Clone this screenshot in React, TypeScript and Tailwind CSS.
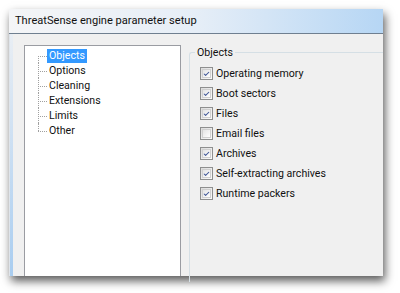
import { Check } from 'lucide-react'

const treeItems = ['Objects', 'Options', 'Cleaning', 'Extensions', 'Limits', 'Other']

const objects = [
  { label: 'Operating memory', checked: true },
  { label: 'Boot sectors', checked: true },
  { label: 'Files', checked: true },
  { label: 'Email files', checked: false },
  { label: 'Archives', checked: true },
  { label: 'Self-extracting archives', checked: true },
  { label: 'Runtime packers', checked: true },
]

function CheckBox({ checked }: { checked: boolean }) {
  return (
    <div className="flex h-[13px] w-[13px] shrink-0 items-center justify-center border border-[#8e8f8f] bg-gradient-to-br from-[#dcdcdc] to-[#fbfbfb]">
      <div className="flex h-[9px] w-[9px] items-center justify-center border border-[#d0d0d0] bg-gradient-to-br from-[#e4e4e4] to-white">
        {checked && <Check className="h-[10px] w-[10px] text-[#3d5596]" strokeWidth={3.5} />}
      </div>
    </div>
  )
}

export default function App() {
  return (
    <div className="h-[293px] w-[400px] overflow-hidden bg-white pl-[9px] pt-[9px] font-['Roboto',sans-serif] text-[10.6px] text-[#111]">
      <div className="flex h-[267px] w-[374px] flex-col shadow-[2px_5px_9px_rgba(0,0,0,0.65)]">

        {/* Title bar */}
        <div className="flex h-[25px] shrink-0 items-center border-b border-[#6f7f90] bg-gradient-to-r from-[#f4f5f7] via-[#e6eef7] to-[#b6d6f4] pl-[6px] pt-[1px] text-[11.1px]">
          ThreatSense engine parameter setup
        </div>

        <div className="flex flex-1">
          {/* left frame */}
          <div className="w-[4px] shrink-0 border-l border-[#dfe4ea] bg-gradient-to-b from-[#e9eef4] to-[#a9cdf0]" />

          <div className="flex flex-1 bg-[#f0f0f0] pl-[11px] pt-[11px]">
            {/* Tree */}
            <div className="w-[157px] shrink-0 border-x border-t border-[#9a9ca2] bg-white pl-[13px] pt-[2px]">
              {treeItems.map((item, i) => (
                <div key={item} className="flex h-[15px] items-center">
                  <div className="relative h-full w-[9px] shrink-0">
                    <div
                      className={
                        i === 0
                          ? 'absolute bottom-0 left-0 top-1/2 border-l border-dotted border-[#a0a0a0]'
                          : i === treeItems.length - 1
                            ? 'absolute left-0 top-0 h-1/2 border-l border-dotted border-[#a0a0a0]'
                            : 'absolute bottom-0 left-0 top-0 border-l border-dotted border-[#a0a0a0]'
                      }
                    />
                    <div className="absolute left-0 right-0 top-1/2 border-t border-dotted border-[#a0a0a0]" />
                  </div>
                  <span className={i === 0 ? 'bg-[#3399ff] px-[2px] leading-[14px] text-white' : 'px-[2px] leading-[14px]'}>
                    {item}
                  </span>
                </div>
              ))}
            </div>

            {/* Objects group */}
            <div className="ml-[8px] flex-1 pt-[1px]">
              <div className="relative mt-[6px] h-full rounded-tl-[3px] border-l border-t border-[#d5dfe5]">
                <span className="absolute -top-[8px] left-[5px] bg-[#f0f0f0] px-[2px] leading-[16px]">Objects</span>
                <div className="flex flex-col gap-[7px] pl-[10px] pt-[14px]">
                  {objects.map((o) => (
                    <div key={o.label} className="flex h-[13px] items-center gap-[3px]">
                      <CheckBox checked={o.checked} />
                      <span className="pt-[1px]">{o.label}</span>
                    </div>
                  ))}
                </div>
              </div>
            </div>
          </div>
        </div>
      </div>
    </div>
  )
}
